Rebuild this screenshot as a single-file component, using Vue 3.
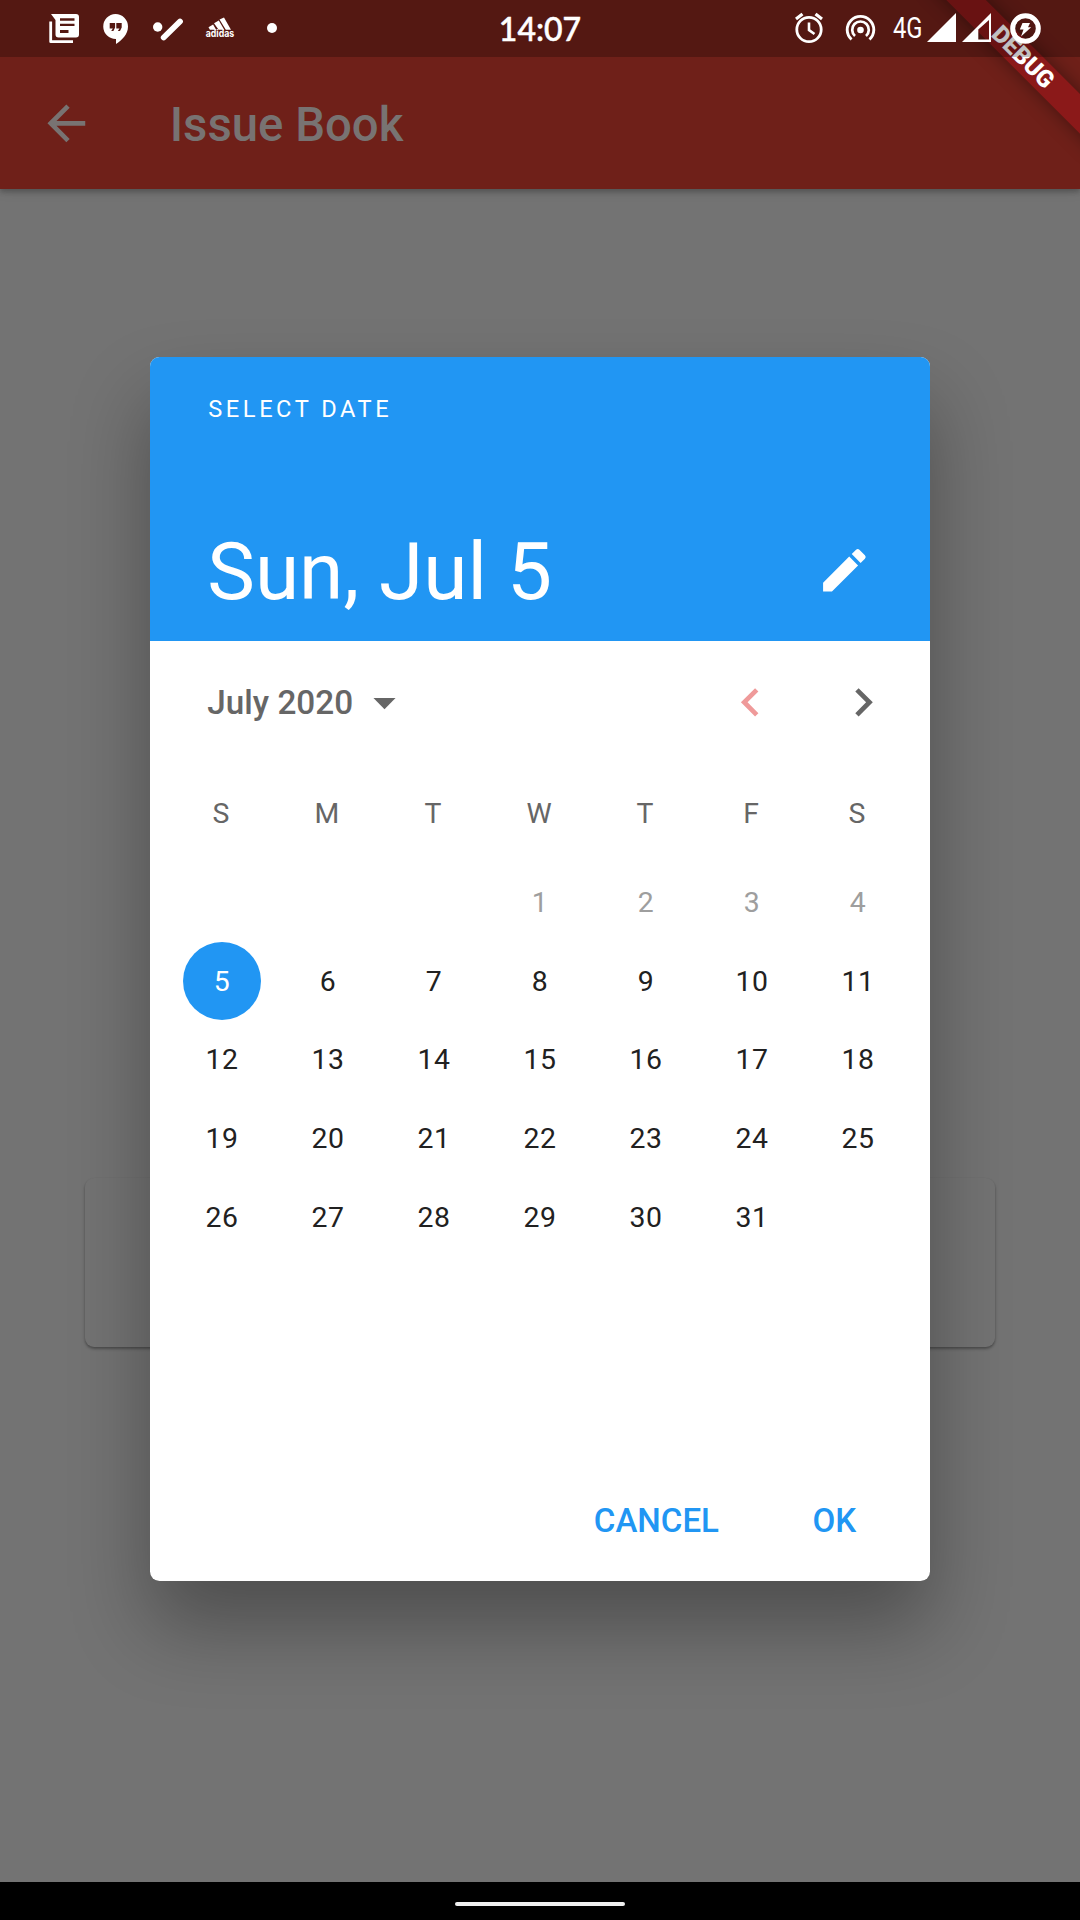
<script setup>
const weekdays = ['S', 'M', 'T', 'W', 'T', 'F', 'S']
const selected = 5
const cells = [
  ...Array(3).fill(null),
  ...Array.from({ length: 31 }, (_, i) => i + 1),
]
</script>

<template>
  <div class="screen">
    <header class="appbar">
      <svg class="back" viewBox="0 0 24 24"><path d="M20 11H7.83l5.59-5.59L12 4l-8 8 8 8 1.41-1.41L7.83 13H20v-2z" /></svg>
      <h1>Issue Book</h1>
    </header>

    <main class="body">
      <div class="card"></div>
    </main>

    <footer class="navbar"><span class="pill"></span></footer>

    <section class="dialog">
      <div class="head">
        <div class="overline">SELECT DATE</div>
        <div class="headline">
          <span>Sun, Jul 5</span>
          <svg viewBox="0 0 24 24"><path d="M3 17.25V21h3.75L17.81 9.94l-3.75-3.75L3 17.25zM20.71 7.04a.996.996 0 0 0 0-1.41l-2.34-2.34a.996.996 0 0 0-1.41 0l-1.83 1.83 3.75 3.75 1.83-1.83z" /></svg>
        </div>
      </div>
      <div class="month">
        <span class="label">July 2020</span>
        <svg class="drop" viewBox="0 0 24 24"><path d="M7 10l5 5 5-5z" /></svg>
        <svg class="prev" viewBox="0 0 24 24"><path d="M15.41 7.41L14 6l-6 6 6 6 1.41-1.41L10.83 12z" /></svg>
        <svg class="next" viewBox="0 0 24 24"><path d="M10 6L8.59 7.41 13.17 12l-4.58 4.59L10 18l6-6z" /></svg>
      </div>
      <div class="grid week">
        <span v-for="(d, i) in weekdays" :key="i">{{ d }}</span>
      </div>
      <div class="grid days">
        <span v-for="(n, i) in cells" :key="i" :class="{ past: n && n < selected, on: n === selected }"><b>{{ n }}</b></span>
      </div>
      <div class="actions">
        <span>CANCEL</span>
        <span>OK</span>
      </div>
    </section>

    <div class="ribbon"><span>DEBUG</span></div>

    <div class="status">
      <svg class="left" width="300" height="57" viewBox="0 0 300 57" fill="#fff">
        <path d="M50.700 21.500V41.700H73" fill="none" stroke="#fff" stroke-width="2.8" stroke-linejoin="round" />
        <path fill-rule="evenodd" d="M51 14H76a3 3 0 0 1 3 3V34.500a3 3 0 0 1-3 3H58.500a3 3 0 0 1-3-3V20ZM60 18.300V20.700H74.500V18.300ZM60 23.700V26.100H74.500V23.700ZM60 30V33H68.500V30Z" />
        <path fill-rule="evenodd" d="M115.500 14a12.500 12.500 0 0 1 12.500 12.500c0 8-6 13.500-12 17.500v-5a12.500 12.500 0 1 1-.5-25ZM109.700 23v5.500h3.200L111.200 31h2.200l1.700-3.500V23ZM116.300 23v5.500h3.200L117.800 31h2.200l1.700-3.500V23Z" />
        <circle cx="157.700" cy="27" r="4.700" />
        <path d="M163.700 37.500L180 21.500" fill="none" stroke="#fff" stroke-width="5.800" stroke-linecap="round" />
        <path d="M208.500 27.300l4.600-2.700 3 5.200h-6.200ZM214 23.200l4.800-2.700 5.400 9.300h-5.600ZM219.500 19.600l4.500-2 7 12.200h-5.200Z" />
        <text x="205.700" y="36.500" textLength="28.500" lengthAdjust="spacingAndGlyphs" class="brand">adidas</text>
        <circle cx="272" cy="28" r="5" />
      </svg>
      <div class="time">14:07</div>
      <svg class="right" width="300" height="57" viewBox="780 0 300 57" fill="#fff">
        <g fill="none" stroke="#fff">
          <circle cx="809" cy="29.500" r="12.200" stroke-width="2.800" />
          <path d="M796 19l6.500-5M822 19l-6.500-5" stroke-width="3.200" />
          <path d="M809 22.500v7.500l5.500 4" stroke-width="2.600" />
          <path d="M851.500 39.500A13.300 13.300 0 1 1 869.500 39.500" stroke-width="2.900" />
          <path d="M855 36A8.300 8.300 0 1 1 866 36" stroke-width="2.700" />
          <circle cx="1025.500" cy="28.500" r="12.800" stroke-width="5" />
        </g>
        <circle cx="860.500" cy="30" r="3.300" />
        <text x="893" y="38" textLength="29.500" lengthAdjust="spacingAndGlyphs" class="net">4G</text>
        <path d="M927 42L956 13V42Z" />
        <path fill-rule="evenodd" d="M962 42L991 13V42ZM978.300 29.500V39.500H989V20Z" />
        <path d="M1022.500 23h7.500l-2 4.300h3.200L1021 36.500l2.500-7h-3.700Z" />
      </svg>
    </div>
  </div>
</template>

<style>
html, body { margin: 0; background: #737373; }
</style>

<style scoped>
.screen {
  position: relative;
  width: 1080px;
  height: 1920px;
  overflow: hidden;
  display: flex;
  flex-direction: column;
  background: #737373;
  font-family: Roboto, "Liberation Sans", sans-serif;
}
svg { display: block; flex: none; }
.appbar {
  height: 132px;
  padding: 57px 0 0 37.500px;
  display: flex;
  align-items: center;
  background: #6f2019;
  box-shadow: 0 3px 5px rgba(0, 0, 0, .22), 0 2px 12px rgba(0, 0, 0, .1);
}
.back { width: 56.7px; height: 56.7px; fill: #787372; }
.appbar h1 { margin: 4px 0 0 75.500px; font-size: 47.3px; line-height: 56px; font-weight: 500; color: #787372; }
.body { flex: 1; padding: 989px 85px 0; }
.card {
  height: 169px;
  border-radius: 9px;
  background: #737373;
  box-shadow: 0 2px 3px rgba(0, 0, 0, .3), 0 1px 2px rgba(0, 0, 0, .08);
}
.navbar { height: 38px; box-sizing: border-box; padding-top: 20px; display: flex; justify-content: center; background: #000; }
.pill { width: 170px; height: 4px; border-radius: 2px; background: #f0f0f0; }

.dialog {
  position: absolute;
  left: 150.300px;
  top: 357.300px;
  width: 779.400px;
  height: 1224px;
  border-radius: 9.500px;
  overflow: hidden;
  background: #fff;
  display: flex;
  flex-direction: column;
  box-shadow: 0 45px 80px rgba(0, 0, 0, .32);
}
.head { height: 283.700px; box-sizing: border-box; padding: 38px 57px 0; background: #2196f3; color: #fff; }
.overline { padding-left: 1px; font-size: 23.640px; line-height: 28px; letter-spacing: 3.550px; }
.headline { display: flex; justify-content: space-between; align-items: center; margin-top: 99px; font-size: 80.200px; line-height: 96px; }
.headline span { padding-top: 2px; margin-bottom: -2px; }
.headline svg { width: 56.700px; height: 56.700px; fill: #fff; }
.month { height: 123px; display: flex; align-items: center; padding-left: 57px; fill: #666; color: #666; }
.label { width: 147px; font-size: 33.300px; font-weight: 500; white-space: nowrap; }
.drop { width: 53px; height: 53px; margin-left: 3.500px; }
.month svg.prev { margin-left: 311px; fill: #ef9a9a; }
.prev, .next { width: 56.700px; height: 56.700px; }
.next { margin-left: 56.700px; }
.grid { display: grid; grid-template-columns: repeat(7, 1fr); margin: 0 18.700px; }
.grid span { display: flex; align-items: center; justify-content: center; }
.week { height: 99px; font-size: 28.400px; color: #666; }
.week span { padding-right: 2px; }
.days { grid-auto-rows: 78.700px; font-size: 28.400px; letter-spacing: 0.600px; color: #212121; }
.days b { box-sizing: border-box; font-weight: 400; width: 78.700px; height: 78.700px; padding-top: 1px; line-height: 78.700px; text-align: center; border-radius: 50%; }
.past { color: #9e9e9e; }
.on b { background: #2196f3; color: #fff; }
.actions { margin-top: auto; height: 121px; display: flex; justify-content: flex-end; align-items: center; gap: 93.500px; padding-right: 73.500px; font-size: 33.100px; font-weight: 500; color: #2196f3; }

.ribbon {
  position: absolute;
  left: 903.150px;
  top: 42.650px;
  width: 240px;
  height: 28.400px;
  transform: rotate(45deg);
  transform-origin: center;
  display: flex;
  align-items: center;
  justify-content: center;
  background: #8b1919;
  box-shadow: 0 0 19px rgba(0, 0, 0, .4);
  color: #fff;
  font-size: 24.100px;
  line-height: 28px;
  font-weight: 900;
}
.status { position: absolute; left: 0; top: 0; width: 1080px; height: 57px; display: flex; justify-content: space-between; background: rgba(0, 0, 0, .245); color: #fff; }
.time { font: 500 32px/58px Lato, sans-serif; -webkit-text-stroke: .5px #fff; }
.brand { font: 700 9.800px Inter, sans-serif; }
.net { font: 400 29px Roboto, sans-serif; }
</style>
